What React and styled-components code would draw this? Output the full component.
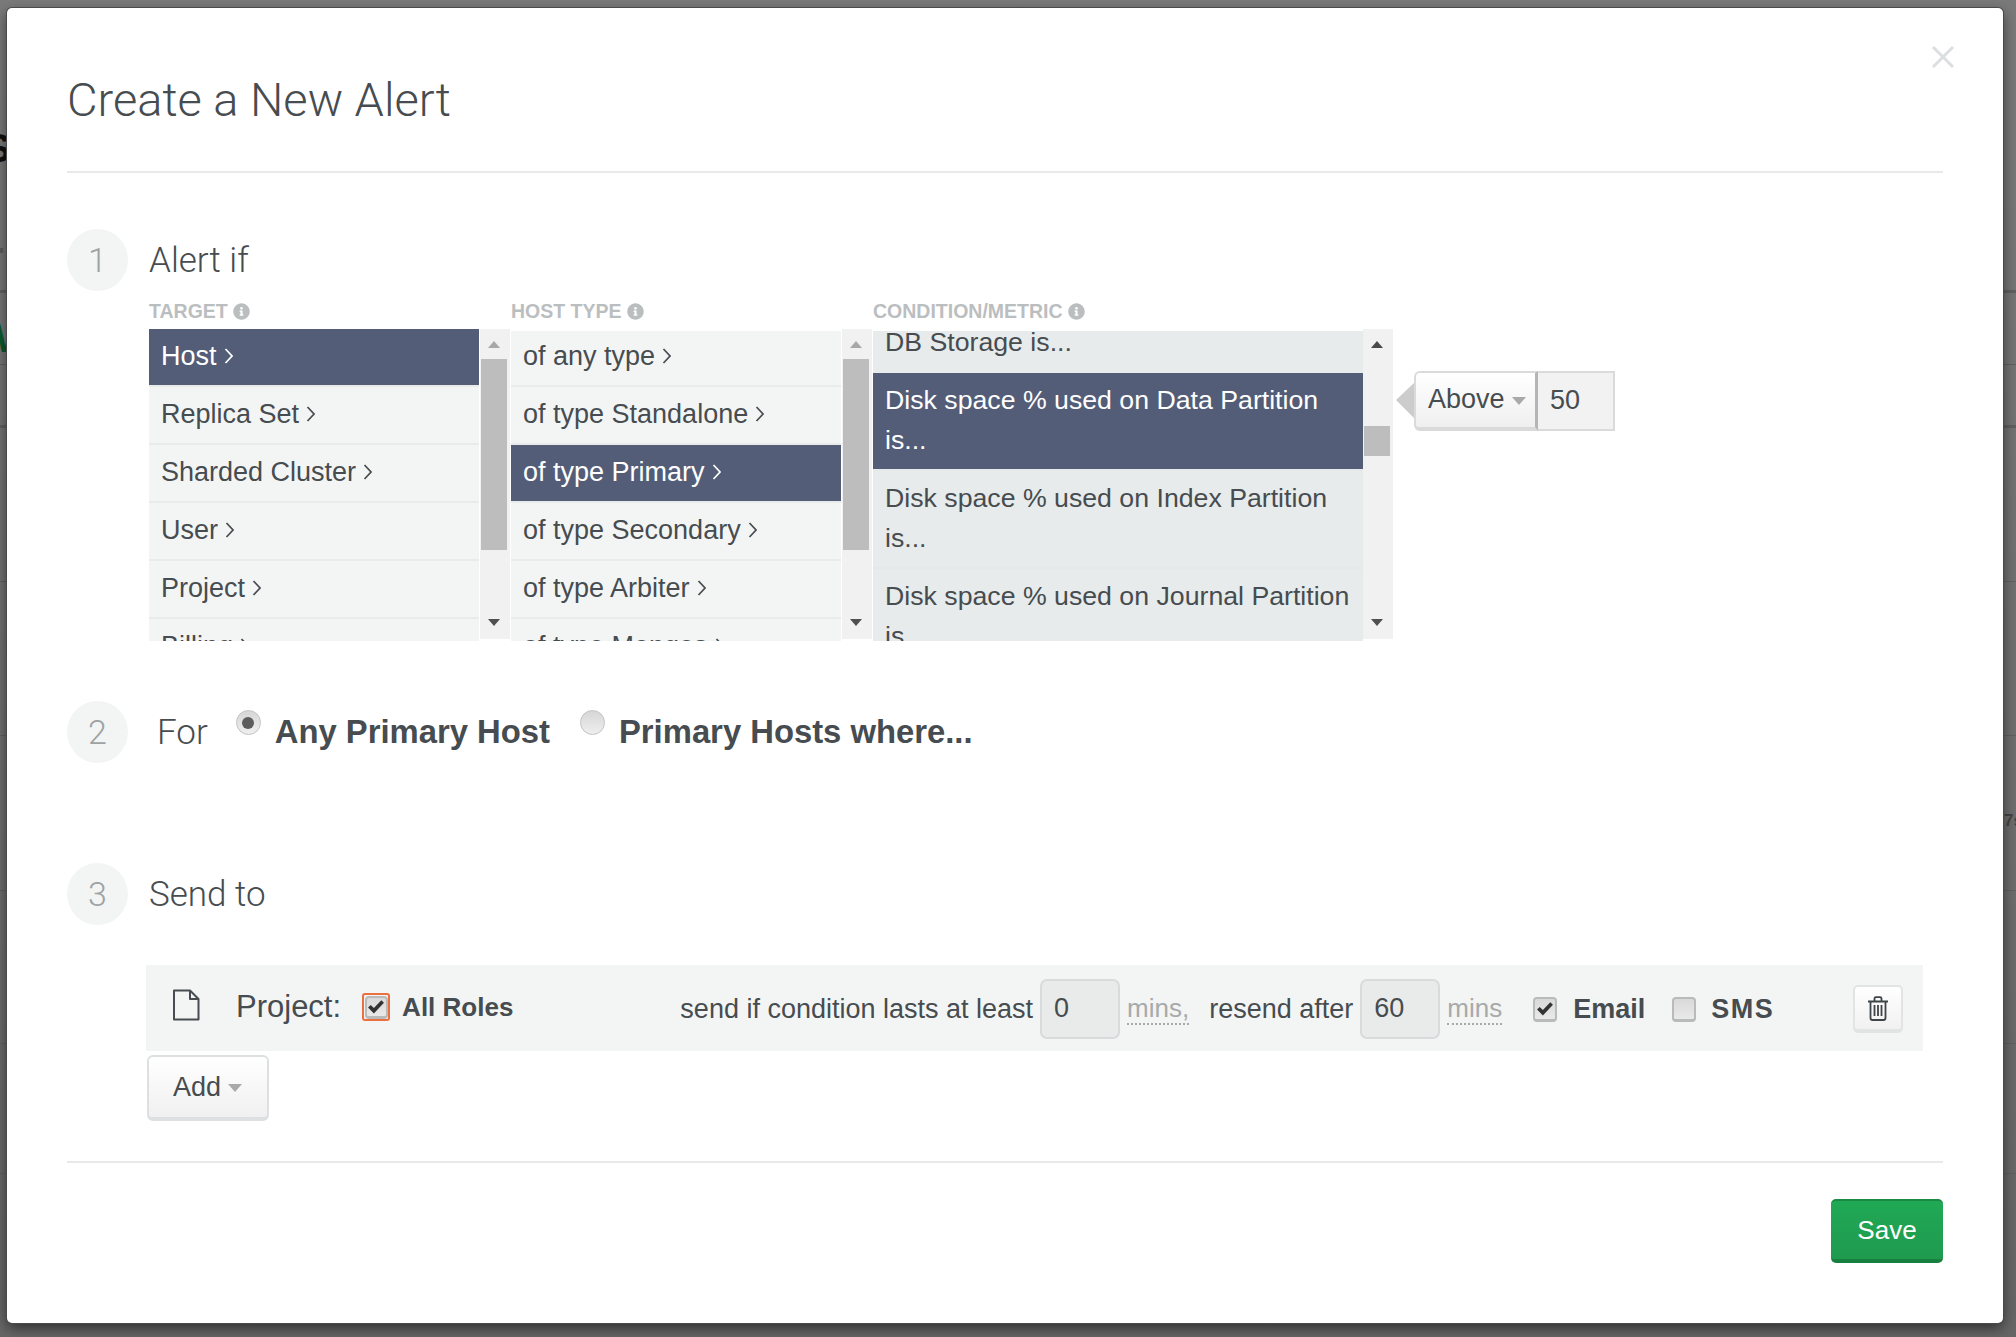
import React from "react";
import styled, { createGlobalStyle } from "styled-components";
import { FaInfoCircle } from "react-icons/fa";

const GlobalStyle = createGlobalStyle`
  html, body {
    margin: 0;
    padding: 0;
    background: #6b6b6b;
  }
  body {
    font-family: "Liberation Sans", Arial, sans-serif;
    color: #464c4f;
  }
`;

const Page = styled.div`
  position: relative;
  box-sizing: border-box;
  width: 2016px;
  height: 1337px;
  padding: 8px 13px 14px 7px;
  overflow: hidden;
  background: linear-gradient(#7a7a7a, #6e6e6e 60%, #666);
`;

// bits of the page behind the overlay that peek out on either side
const BehindText = styled.span`
  position: absolute;
  left: ${(p) => p.$left}px;
  top: ${(p) => p.$top}px;
  font-size: ${(p) => p.$size || 40}px;
  font-weight: 700;
  line-height: 1;
  color: ${(p) => p.$color};
`;

const BehindRule = styled.div`
  position: absolute;
  left: 0;
  right: 0;
  top: ${(p) => p.$top}px;
  height: ${(p) => p.$height || 1}px;
  background: #606060;
`;

const Modal = styled.div`
  position: relative;
  box-sizing: border-box;
  height: 100%;
  padding: 0 60px;
  background: #fff;
  border-radius: 5px;
  box-shadow: 0 0 0 1px #4a4a4a, 0 5px 14px rgba(0, 0, 0, 0.55);
`;

const CloseButton = styled.svg`
  position: absolute;
  top: 37px;
  right: 48px;
  width: 24px;
  height: 24px;
`;

const Title = styled.h1`
  margin: 0;
  height: 165px;
  box-sizing: border-box;
  padding-top: 62px;
  font-family: Roboto, "Liberation Sans", sans-serif;
  font-size: 47px;
  font-weight: 300;
  line-height: 60px;
  color: #464c4f;
  border-bottom: 2px solid #e8e9e9;
`;

const SectionHead = styled.div`
  display: flex;
  align-items: center;
  gap: ${(p) => p.$gap ?? 21}px;
  margin-top: ${(p) => p.$top}px;
  height: 62px;
`;

const StepNumber = styled.div`
  display: flex;
  flex: none;
  align-items: center;
  justify-content: center;
  width: 61px;
  height: 62px;
  border-radius: 50%;
  background: #f3f5f5;
  font-family: Roboto, "Liberation Sans", sans-serif;
  font-size: 34px;
  font-weight: 300;
  color: #9ea2a3;
`;

const SectionTitle = styled.div`
  margin-left: ${(p) => p.$left || 0}px;
  font-family: Roboto, "Liberation Sans", sans-serif;
  font-size: 35px;
  font-weight: 300;
  color: #464c4f;
`;

const Picker = styled.div`
  display: flex;
  margin: 8px 0 0 82px;
`;

const Column = styled.div`
  flex: none;
  margin-right: 1px;
`;

const ColumnLabel = styled.div`
  display: flex;
  align-items: center;
  gap: 5px;
  height: 24px;
  margin-bottom: 6px;
  font-size: 19.5px;
  font-weight: 700;
  color: #bbbebf;
  svg {
    width: 17px;
    height: 17px;
  }
`;

const ColumnBody = styled.div`
  display: flex;
  height: 312px;
`;

const List = styled.div`
  width: ${(p) => p.$width}px;
  margin-right: ${(p) => p.$gap}px;
  overflow: hidden;
`;

const Item = styled.div`
  display: flex;
  align-items: flex-start;
  gap: 7px;
  box-sizing: border-box;
  height: 58px;
  padding: ${(p) => (p.$first && !p.$active ? 5 : 7)}px 12px 0;
  line-height: 40px;
  font-size: 27px;
  white-space: nowrap;
  background: ${(p) => (p.$active ? "#535d77" : "#f3f5f5")};
  background-clip: padding-box;
  color: ${(p) => (p.$active ? "#fff" : "#464c4f")};
  border-top: ${(p) => (p.$first && !p.$active ? "2px solid #fff" : "0")};
  border-bottom: 2px solid #e9ebeb;
`;

const Chevron = styled.svg`
  flex: none;
  width: 9px;
  height: 16px;
  margin-top: 12px;
`;

const MetricList = styled(List)`
  margin-top: 2px;
  height: 310px;
  background: #e7ebeb;
`;

const MetricScroll = styled.div`
  margin-top: -18px;
`;

const MetricItem = styled.div`
  box-sizing: border-box;
  padding: 7px 6px 9px 12px;
  line-height: 40px;
  font-size: 26.7px;
  color: ${(p) => (p.$active ? "#fff" : "#464c4f")};
  background: ${(p) => (p.$active ? "#535d77" : "#e7ebeb")};
  border-top: 2px solid ${(p) => (p.$active ? "#e7ebeb" : "#e5e9e9")};
`;

const Track = styled.div`
  display: flex;
  flex: none;
  flex-direction: column;
  box-sizing: border-box;
  width: 30px;
  height: 310px;
  padding: 12px 0 13px;
  background: #f1f1f1;
`;

const Arrow = styled.div`
  align-self: flex-start;
  flex: none;
  width: 0;
  height: 0;
  margin-left: 8px;
  margin-top: ${(p) => (p.$down ? "auto" : "0")};
  border-left: 6px solid transparent;
  border-right: 6px solid transparent;
  border-top: ${(p) => (p.$down ? `7px solid ${p.$color}` : "0")};
  border-bottom: ${(p) => (p.$down ? "0" : `7px solid ${p.$color}`)};
`;

const Thumb = styled.div`
  flex: none;
  width: 26px;
  margin: ${(p) => p.$top}px 0 0 1px;
  height: ${(p) => p.$height}px;
  background: #bdbdbd;
`;

const Threshold = styled.div`
  position: relative;
  display: flex;
  align-self: flex-start;
  height: 60px;
  margin: 72px 0 0 20px;
  &::before {
    content: "";
    position: absolute;
    left: -18px;
    top: 12px;
    border-top: 17px solid transparent;
    border-bottom: 18px solid transparent;
    border-right: 18px solid #cccccc;
  }
`;

const ThresholdButton = styled.div`
  display: flex;
  align-items: center;
  gap: 7px;
  box-sizing: border-box;
  width: 124px;
  padding: 0 0 1px 12px;
  font-size: 27px;
  background: linear-gradient(#fff, #efefef);
  border: 2px solid #dadada;
  border-bottom-width: 4px;
  border-right: 3px solid #b5b5b5;
  border-radius: 6px 0 0 6px;
`;

const ThresholdValue = styled.div`
  display: flex;
  align-items: center;
  box-sizing: border-box;
  width: 77px;
  padding: 0 0 1px 12px;
  font-size: 27px;
  background: #f2f2f2;
  border: 2px solid #dadada;
  border-left: 0;
`;

const Caret = styled.span`
  flex: none;
  width: 0;
  height: 0;
  margin-top: 2px;
  border-left: 7px solid transparent;
  border-right: 7px solid transparent;
  border-top: 8px solid #a9a9a9;
`;

const RadioOption = styled.label`
  display: flex;
  align-items: center;
  gap: 14px;
  margin-left: ${(p) => p.$left}px;
  font-size: 32.8px;
  font-weight: 700;
  color: #464c4f;
  white-space: nowrap;
`;

const RadioDot = styled.span`
  display: flex;
  flex: none;
  align-items: center;
  justify-content: center;
  box-sizing: border-box;
  width: 25px;
  height: 25px;
  margin-top: -19px;
  border-radius: 50%;
  border: 1px solid #c3c3c3;
  background: linear-gradient(#d6d6d6, #efefef);
  &::after {
    content: "";
    display: ${(p) => (p.$on ? "block" : "none")};
    width: 12px;
    height: 12px;
    border-radius: 50%;
    background: #5c5c5c;
  }
`;

const RecipientRow = styled.div`
  display: flex;
  align-items: center;
  box-sizing: border-box;
  height: 86px;
  margin: 40px 20px 0 79px;
  padding: 2px 20px 0 26px;
  background: #f3f5f5;
  font-size: 27px;
  white-space: nowrap;
`;

const DocIcon = styled.svg`
  flex: none;
  width: 28px;
  height: 32px;
  margin: -8px 36px 0 0;
`;

const RecipientName = styled.span`
  margin: -4px 21px 0 0;
  font-size: 31px;
`;

const Box = styled.span`
  display: flex;
  flex: none;
  align-items: center;
  justify-content: center;
  box-sizing: border-box;
  width: 24px;
  height: 25px;
  margin-left: ${(p) => p.$left || 0}px;
  border-radius: 4px;
  border: 2px solid #b9bbbb;
  border-bottom-width: 3px;
  background: linear-gradient(#d9d9d9, #e9e9e9);
  svg {
    width: 18px;
    height: 15px;
  }
`;

const FocusRing = styled.span`
  display: flex;
  flex: none;
  align-items: center;
  justify-content: center;
  box-sizing: border-box;
  width: 28px;
  height: 28px;
  margin-top: -4px;
  border: 2px solid #ec6f3f;
  border-radius: 3px;
  ${Box} {
    width: 23px;
    height: 23px;
  }
`;

const BoldLabel = styled.span`
  margin-left: ${(p) => p.$left}px;
  margin-top: ${(p) => p.$top || 0}px;
  font-weight: 700;
  font-size: ${(p) => p.$size || 27}px;
  letter-spacing: ${(p) => p.$spacing || 0}px;
`;

const PlainText = styled.span`
  margin-left: ${(p) => p.$left}px;
`;

const MinsInput = styled.div`
  display: flex;
  align-items: center;
  flex: none;
  box-sizing: border-box;
  width: 80px;
  height: 60px;
  margin-left: ${(p) => p.$left}px;
  padding: 0 0 2px 12px;
  border: 2px solid #d8dbdb;
  border-radius: 7px;
  background: #e9ebeb;
`;

const Unit = styled.span`
  margin-left: 7px;
  font-size: 26px;
  color: #a7a9aa;
  border-bottom: 2px dotted #a7a9aa;
  line-height: 30px;
`;

const Trash = styled.div`
  display: flex;
  align-items: center;
  justify-content: center;
  flex: none;
  box-sizing: border-box;
  width: 50px;
  height: 48px;
  margin-left: auto;
  background: linear-gradient(#fff, #f1f1f1);
  border: 2px solid #e2e4e4;
  border-bottom-width: 4px;
  border-radius: 5px;
`;

const AddButton = styled.div`
  display: inline-flex;
  align-items: center;
  gap: 7px;
  box-sizing: border-box;
  width: 122px;
  height: 66px;
  margin: 4px 0 0 80px;
  padding: 0 0 0 24px;
  font-size: 27px;
  background: linear-gradient(#fff, #f0f0f0);
  border: 2px solid #dde0e0;
  border-bottom-width: 4px;
  border-radius: 6px;
`;

const Footer = styled.div`
  display: flex;
  justify-content: flex-end;
  margin-top: 40px;
  padding-top: 36px;
  border-top: 2px solid #e8e9e9;
`;

const SaveButton = styled.div`
  display: flex;
  align-items: center;
  justify-content: center;
  box-sizing: border-box;
  width: 112px;
  height: 64px;
  font-size: 26px;
  color: #fff;
  background: linear-gradient(#20a955, #1f9a4f);
  border-top: 2px solid #1a8a45;
  border-bottom: 4px solid #18803f;
  border-radius: 5px;
`;

const ChevronIcon = ({ color }) => (
  <Chevron viewBox="0 0 9 16">
    <path d="M1.5 1 L8 8 L1.5 15" fill="none" stroke={color} strokeWidth="1.7" />
  </Chevron>
);

const Check = () => (
  <svg viewBox="0 0 17 14">
    <path d="M1 8 L3.5 5.5 L6.5 8.5 L13.5 1 L16 3.5 L6.5 13.5 Z" fill="#333" />
  </svg>
);

const targets = ["Host", "Replica Set", "Sharded Cluster", "User", "Project", "Billing"];
const hostTypes = [
  "of any type",
  "of type Standalone",
  "of type Primary",
  "of type Secondary",
  "of type Arbiter",
  "of type Mongos",
];
const metrics = [
  "DB Storage is...",
  "Disk space % used on Data Partition is...",
  "Disk space % used on Index Partition is...",
  "Disk space % used on Journal Partition is...",
];
const behindRules = [
  { top: 290, height: 3 },
  { top: 364 },
  { top: 425, height: 3 },
  { top: 581 },
  { top: 735 },
  { top: 890 },
  { top: 1043 },
  { top: 1173 },
];

const PickerColumn = ({ label, items, active }) => (
  <Column>
    <ColumnLabel>
      {label} <FaInfoCircle />
    </ColumnLabel>
    <ColumnBody>
      <List $width={330} $gap={1}>
        {items.map((item, i) => (
          <Item key={item} $active={i === active} $first={i === 0}>
            {item}
            <ChevronIcon color={i === active ? "#fff" : "#464c4f"} />
          </Item>
        ))}
      </List>
      <Track>
        <Arrow $color="#a8a8a8" />
        <Thumb $top={11} $height={191} />
        <Arrow $down $color="#505050" />
      </Track>
    </ColumnBody>
  </Column>
);

export default function App() {
  return (
    <Page>
      <GlobalStyle />
      {behindRules.map((r) => (
        <BehindRule key={r.top} $top={r.top} $height={r.height} />
      ))}
      <BehindText $left={-16} $top={128} $color="#111">
        S
      </BehindText>
      <BehindText $left={-12} $top={236} $color="#5a5a5a">
        r
      </BehindText>
      <BehindText $left={-22} $top={318} $color="#0c5a2c">
        W
      </BehindText>
      <BehindText $left={2004} $top={812} $size={17} $color="#454545">
        7s
      </BehindText>
      <Modal>
        <CloseButton viewBox="0 0 24 24">
          <path d="M2 2 L22 22 M22 2 L2 22" stroke="#dcdfdf" strokeWidth="3" fill="none" />
        </CloseButton>
        <Title>Create a New Alert</Title>

        <SectionHead $top={56}>
          <StepNumber>1</StepNumber>
          <SectionTitle>Alert if</SectionTitle>
        </SectionHead>
        <Picker>
          <PickerColumn label="TARGET" items={targets} active={0} />
          <PickerColumn label="HOST TYPE" items={hostTypes} active={2} />
          <Column>
            <ColumnLabel>
              CONDITION/METRIC <FaInfoCircle />
            </ColumnLabel>
            <ColumnBody>
              <MetricList $width={490} $gap={0}>
                <MetricScroll>
                  {metrics.map((m, i) => (
                    <MetricItem key={m} $active={i === 1}>
                      {m}
                    </MetricItem>
                  ))}
                </MetricScroll>
              </MetricList>
              <Track>
                <Arrow $color="#4a4a4a" />
                <Thumb $top={78} $height={30} />
                <Arrow $down $color="#505050" />
              </Track>
            </ColumnBody>
          </Column>
          <Threshold>
            <ThresholdButton>
              Above <Caret />
            </ThresholdButton>
            <ThresholdValue>50</ThresholdValue>
          </Threshold>
        </Picker>

        <SectionHead $top={60} $gap={0}>
          <StepNumber>2</StepNumber>
          <SectionTitle $left={29}>For</SectionTitle>
          <RadioOption $left={28}>
            <RadioDot $on />
            Any Primary Host
          </RadioOption>
          <RadioOption $left={30}>
            <RadioDot />
            Primary Hosts where...
          </RadioOption>
        </SectionHead>

        <SectionHead $top={100}>
          <StepNumber>3</StepNumber>
          <SectionTitle>Send to</SectionTitle>
        </SectionHead>
        <RecipientRow>
          <DocIcon viewBox="0 0 28 32">
            <path
              d="M2 1.5 H18 L26.5 10 V30.5 H2 Z M18 1.5 V10 H26.5"
              fill="none"
              stroke="#464c4f"
              strokeWidth="2"
              strokeLinejoin="round"
            />
          </DocIcon>
          <RecipientName>Project:</RecipientName>
          <FocusRing>
            <Box>
              <Check />
            </Box>
          </FocusRing>
          <BoldLabel $left={12} $top={-4} $size={26}>
            All Roles
          </BoldLabel>
          <PlainText $left={167}>send if condition lasts at least</PlainText>
          <MinsInput $left={7}>0</MinsInput>
          <Unit>mins,</Unit>
          <PlainText $left={20}>resend after</PlainText>
          <MinsInput $left={7}>60</MinsInput>
          <Unit>mins</Unit>
          <Box $left={31}>
            <Check />
          </Box>
          <BoldLabel $left={16}>Email</BoldLabel>
          <Box $left={27} />
          <BoldLabel $left={15} $spacing={1.5}>
            SMS
          </BoldLabel>
          <Trash>
            <svg width="22" height="25" viewBox="0 0 22 25">
              <path
                d="M1 5.5 H21 M3.5 5.5 V22 Q3.5 24 5.5 24 H16.5 Q18.5 24 18.5 22 V5.5 M7.5 5.5 V2.5 Q7.5 1.2 9 1.2 H13 Q14.5 1.2 14.5 2.5 V5.5 M7.5 9 V20 M11 9 V20 M14.5 9 V20"
                fill="none"
                stroke="#3e4447"
                strokeWidth="1.8"
              />
            </svg>
          </Trash>
        </RecipientRow>
        <AddButton>
          Add <Caret />
        </AddButton>
        <Footer>
          <SaveButton>Save</SaveButton>
        </Footer>
      </Modal>
    </Page>
  );
}
